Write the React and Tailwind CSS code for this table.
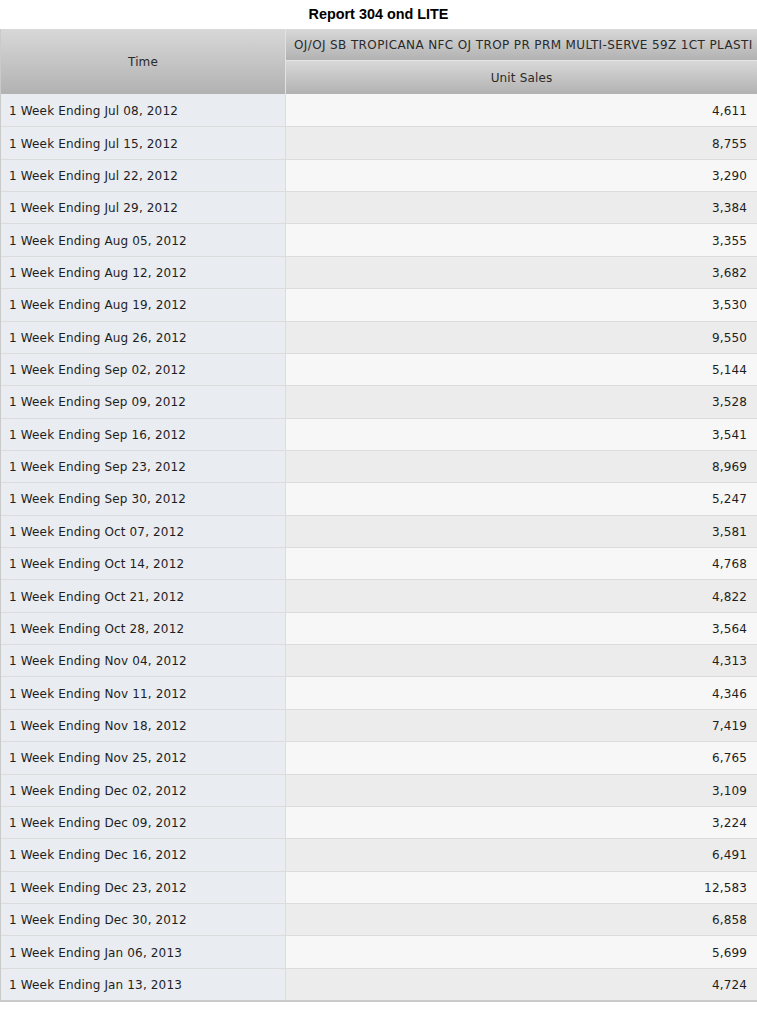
import React from "react";

const rows = [
	["Jul 08, 2012", "4,611"],
	["Jul 15, 2012", "8,755"],
	["Jul 22, 2012", "3,290"],
	["Jul 29, 2012", "3,384"],
	["Aug 05, 2012", "3,355"],
	["Aug 12, 2012", "3,682"],
	["Aug 19, 2012", "3,530"],
	["Aug 26, 2012", "9,550"],
	["Sep 02, 2012", "5,144"],
	["Sep 09, 2012", "3,528"],
	["Sep 16, 2012", "3,541"],
	["Sep 23, 2012", "8,969"],
	["Sep 30, 2012", "5,247"],
	["Oct 07, 2012", "3,581"],
	["Oct 14, 2012", "4,768"],
	["Oct 21, 2012", "4,822"],
	["Oct 28, 2012", "3,564"],
	["Nov 04, 2012", "4,313"],
	["Nov 11, 2012", "4,346"],
	["Nov 18, 2012", "7,419"],
	["Nov 25, 2012", "6,765"],
	["Dec 02, 2012", "3,109"],
	["Dec 09, 2012", "3,224"],
	["Dec 16, 2012", "6,491"],
	["Dec 23, 2012", "12,583"],
	["Dec 30, 2012", "6,858"],
	["Jan 06, 2013", "5,699"],
	["Jan 13, 2013", "4,724"],
];

const headerBg = "bg-gradient-to-b from-[#d8d8d8] to-[#b2b2b2]";

export default function App() {
	return (
		<div className="w-[757px] bg-white font-['DejaVu_Sans',Verdana,sans-serif] text-[12px] tracking-[0.15px] text-[#1e1e1e]">
			<div className="h-[29px] flex items-center justify-center font-['Liberation_Sans',Arial,sans-serif] font-bold text-[14.4px] tracking-normal text-black">
				Report 304 ond LITE
			</div>

			<div className="border-l border-b-2 border-[#cacaca]">
				{/* header */}
				<div className="flex h-[65px]">
					<div className={`w-[285px] shrink-0 flex items-center justify-center border-r border-[#e2e2e2] text-[#2a2a2a] ${headerBg}`}>
						Time
					</div>
					<div className="flex-1 min-w-0 flex flex-col">
						<div className={`h-[32px] flex items-center pl-[8px] overflow-hidden whitespace-nowrap tracking-[0.38px] text-[#2a2a2a] border-b border-[#e4e4e4] ${headerBg}`}>
							OJ/OJ SB TROPICANA NFC OJ TROP PR PRM MULTI-SERVE 59Z 1CT PLASTI
						</div>
						<div className={`flex-1 flex items-center justify-center text-[#2a2a2a] ${headerBg}`}>
							Unit Sales
						</div>
					</div>
				</div>

				{/* body */}
				{rows.map(([date, value], i) => (
					<div key={date} className="flex h-[32.36px]">
						<div
							className={`w-[285px] shrink-0 flex items-center pl-[8px] pt-[1px] bg-[#e9ecf0] border-r border-[#dcdcdc] ${
								i > 0 ? "border-t border-[#dadde1]" : ""
							}`}
						>
							1 Week Ending {date}
						</div>
						<div
							className={`flex-1 flex items-center justify-end pr-[10px] pt-[1px] ${
								i % 2 === 0 ? "bg-[#f7f7f7]" : "bg-[#ececec]"
							} ${i > 0 ? "border-t border-[#dcdcdc]" : ""}`}
						>
							{value}
						</div>
					</div>
				))}
			</div>
		</div>
	);
}
